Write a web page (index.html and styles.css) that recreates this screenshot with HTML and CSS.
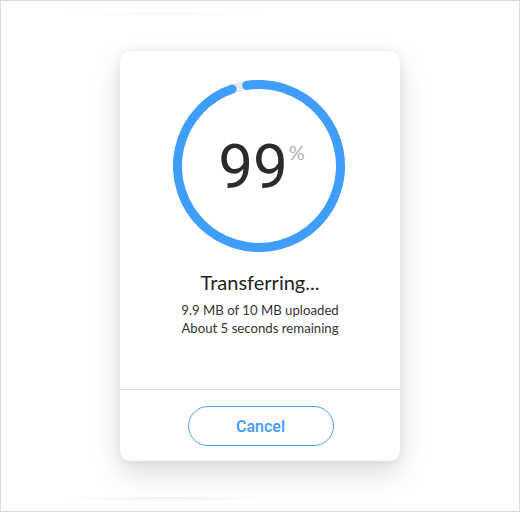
FILE: index.html
```html
<!DOCTYPE html>
<html>
<head>
<meta charset="utf-8">
<link rel="stylesheet" href="styles.css">
</head>
<body>
<div class="frame">
  <div class="ghost ghost-top"></div>
  <div class="ghost ghost-bottom"></div>
  <div class="card">
    <div class="body">
      <div class="ring">
        <svg width="172" height="172" viewBox="0 0 172 172">
          <circle cx="86" cy="86" r="81.5" fill="none" stroke="#e6e9ec" stroke-width="9"/>
          <path d="M 73.67 5.44 A 81.5 81.5 0 1 1 59.06 9.08" fill="none" stroke="#3f9dfb" stroke-width="9" stroke-linecap="round"/>
        </svg>
        <div class="pct"><span class="num">99</span><span class="sign">%</span></div>
      </div>
      <div class="title">Transferring...</div>
      <div class="meta">9.9 MB of 10 MB uploaded<br>About 5 seconds remaining</div>
    </div>
    <div class="footer">
      <button class="cancel">Cancel</button>
    </div>
  </div>
</div>
</body>
</html>
```
FILE: styles.css
```css
html, body {
  margin: 0;
  padding: 0;
  background: #fff;
}
.frame {
  position: relative;
  width: 520px;
  height: 512px;
  box-sizing: border-box;
  border: 1px solid #dcdcdc;
  display: flex;
  justify-content: center;
  padding-top: 50px;
  overflow: hidden;
}
.ghost {
  position: absolute;
  left: 60px;
  width: 210px;
  height: 10px;
}
.ghost-top {
  top: 4px;
  background: radial-gradient(ellipse 50% 30% at 50% 100%, rgba(0,0,0,0.035), rgba(0,0,0,0));
}
.ghost-bottom {
  top: 496px;
  background: radial-gradient(ellipse 50% 60% at 50% 0%, rgba(0,0,0,0.06), rgba(0,0,0,0));
}
.card {
  width: 280px;
  height: 410px;
  background: #fff;
  border-radius: 10px;
  box-shadow: 0 12px 28px rgba(0,0,0,0.14), 0 0 10px rgba(0,0,0,0.07);
  display: flex;
  flex-direction: column;
}
.body {
  flex: 1;
  display: flex;
  flex-direction: column;
  align-items: center;
  padding-top: 29px;
  border-bottom: 1px solid #dcdcdc;
}
.ring {
  position: relative;
  width: 172px;
  height: 172px;
  margin-right: 2px;
}
.ring svg {
  display: block;
}
.pct {
  position: absolute;
  inset: 0;
  display: flex;
  justify-content: center;
  align-items: center;
  padding-left: 5px;
  padding-top: 2px;
  font-family: "Roboto", "Lato", sans-serif;
  color: #2b2b2b;
}
.num {
  font-size: 62px;
  font-weight: 400;
  line-height: 1;
}
.sign {
  font-family: "Lato", sans-serif;
  font-size: 20px;
  color: #b0b0b0;
  align-self: flex-start;
  margin-top: 58px;
  margin-left: 1px;
}
.title {
  margin-top: 18px;
  font-family: "Lato", "Noto Sans", sans-serif;
  font-size: 20px;
  color: #222;
  line-height: 24px;
}
.meta {
  margin-top: 7px;
  font-family: "Lato", "Noto Sans", sans-serif;
  font-size: 13.2px;
  line-height: 18px;
  color: #333;
  text-align: center;
}
.footer {
  height: 71px;
  display: flex;
  justify-content: center;
  align-items: flex-start;
  padding-top: 16px;
  box-sizing: border-box;
}
.cancel {
  width: 146px;
  height: 40px;
  border: 1px solid #4aa2ff;
  border-radius: 20px;
  background: #fff;
  color: #3d9bff;
  font-family: "Roboto", Arial, sans-serif;
  font-weight: 500;
  font-size: 16px;
  padding: 0;
  margin-left: 1px;
}
```
